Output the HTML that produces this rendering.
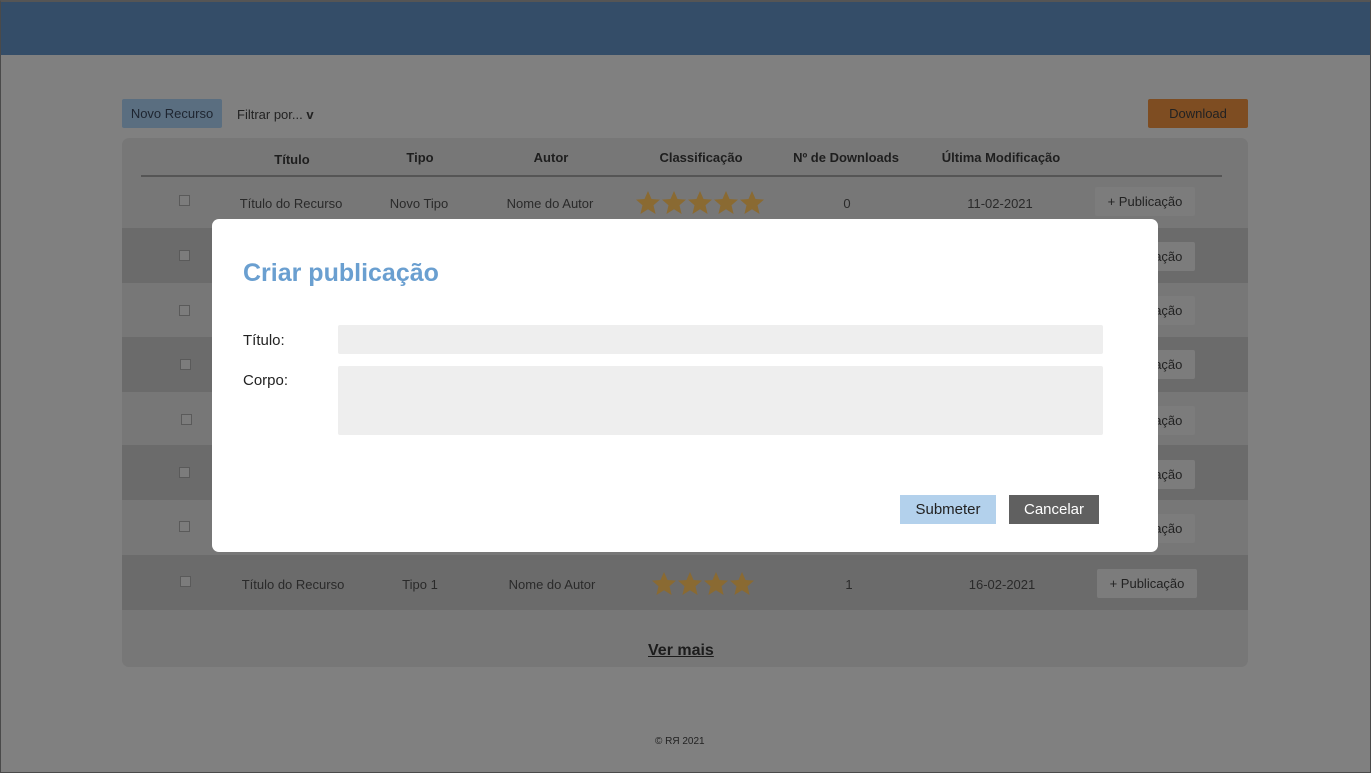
<!DOCTYPE html>
<html><head><meta charset="utf-8"><style>
*{margin:0;padding:0;box-sizing:border-box}
body{width:1371px;height:773px;background:#808080;font-family:"Liberation Sans","DejaVu Sans",sans-serif;position:relative;overflow:hidden;color:#1f1f1f}
.frame{position:absolute;left:0;top:0;width:1371px;height:773px;border:1px solid #4a4a4a;border-top:2px solid #555}
.hdr{position:absolute;left:1px;top:2px;width:1369px;height:53px;background:#344d68}
.abs{position:absolute}
.btn1{left:122px;top:99px;width:100px;height:29px;background:#5a6e80;border-radius:2px;font-size:13px;line-height:29px;text-align:center;color:#1e2530}
.filt{left:237px;top:107px;font-size:13px;color:#222}
.dl{left:1148px;top:99px;width:100px;height:29px;background:#7e4d22;border-radius:2px;font-size:13px;line-height:29px;text-align:center;color:#222}
.tbl{left:122px;top:138px;width:1126px;height:529px;background:#777;border-radius:7px;overflow:hidden}
.th{position:absolute;top:12px;font-size:13px;font-weight:bold;color:#1e1e1e;transform:translateX(-50%)}
.line{position:absolute;left:19px;top:37px;width:1081px;height:2px;background:#555}
.row{position:absolute;left:0;width:1126px;font-size:13px;color:#2a2a2a}
.row.d{background:#6b6b6b}
.row span{position:absolute;transform:translateX(-50%);white-space:nowrap}
.cb{position:absolute;width:11px;height:11px;border:1px solid #5a5a5a;background:#7c7c7c}
.pub{position:absolute;width:100px;height:29px;background:#7c7c7c;border-radius:2px;font-size:13px;line-height:29px;text-align:center;color:#222}
.stars{position:absolute}
.ver{left:648px;top:642px;font-size:16px;font-weight:bold;text-decoration:underline;color:#1c1c1c}
.foot{left:655px;top:736px;font-size:10px;color:#222}
.modal{left:212px;top:219px;width:946px;height:333px;background:#fff;border-radius:7px}
.mt{left:31px;top:40px;font-size:25px;font-weight:bold;color:#6a9fd0}
.lbl{font-size:15px;color:#222}
.inp{background:#eee;border-radius:2px}
.sub{left:688px;top:276px;width:96px;height:29px;background:#b3d1ec;color:#222;font-size:15px;line-height:29px;text-align:center}
.can{left:797px;top:276px;width:90px;height:29px;background:#606060;color:#fff;font-size:15px;line-height:29px;text-align:center}
</style></head><body>
<svg width="0" height="0" style="position:absolute"><defs><polygon id="st" points="12,0 15.5,8 24,8.6 17.5,14.3 19.6,23 12,18.3 4.4,23 6.5,14.3 0,8.6 8.5,8" fill="#8a6a32"/></defs></svg>
<div class="hdr"></div>
<div class="abs btn1">Novo Recurso</div>
<div class="abs filt">Filtrar por... <b>v</b></div>
<div class="abs dl">Download</div>
<div class="abs tbl">
 <div class="th" style="left:170px;top:14px">Título</div>
 <div class="th" style="left:298px">Tipo</div>
 <div class="th" style="left:429px">Autor</div>
 <div class="th" style="left:579px">Classificação</div>
 <div class="th" style="left:724px">Nº de Downloads</div>
 <div class="th" style="left:879px">Última Modificação</div>
 <div class="line"></div>
 <div class="row" style="top:39px;height:51px">
  <div class="cb" style="left:57px;top:18px"></div>
  <span style="left:169px;top:19px">Título do Recurso</span>
  <span style="left:297px;top:19px">Novo Tipo</span>
  <span style="left:428px;top:19px">Nome do Autor</span>
  <svg class="stars" style="left:514px;top:14px" width="128" height="24"><use href="#st" x="0"/><use href="#st" x="26"/><use href="#st" x="52"/><use href="#st" x="78"/><use href="#st" x="104"/></svg>
  <span style="left:725px;top:19px">0</span>
  <span style="left:878px;top:19px">11-02-2021</span>
  <div class="pub" style="left:973px;top:10px">+ Publicação</div>
 </div>
 <div class="row d" style="top:90px;height:55px"><div class="cb" style="left:57px;top:22px"></div><div class="pub" style="left:973px;top:14px">+ Publicação</div></div>
 <div class="row" style="top:145px;height:54px"><div class="cb" style="left:57px;top:22px"></div><div class="pub" style="left:973px;top:13px">+ Publicação</div></div>
 <div class="row d" style="top:199px;height:55px"><div class="cb" style="left:58px;top:22px"></div><div class="pub" style="left:973px;top:13px">+ Publicação</div></div>
 <div class="row" style="top:254px;height:53px"><div class="cb" style="left:59px;top:22px"></div><div class="pub" style="left:973px;top:14px">+ Publicação</div></div>
 <div class="row d" style="top:307px;height:55px"><div class="cb" style="left:57px;top:22px"></div><div class="pub" style="left:973px;top:15px">+ Publicação</div></div>
 <div class="row" style="top:362px;height:55px"><div class="cb" style="left:57px;top:21px"></div><div class="pub" style="left:973px;top:14px">+ Publicação</div></div>
 <div class="row d" style="top:417px;height:55px">
  <div class="cb" style="left:58px;top:21px"></div>
  <span style="left:171px;top:22px">Título do Recurso</span>
  <span style="left:298px;top:22px">Tipo 1</span>
  <span style="left:430px;top:22px">Nome do Autor</span>
  <svg class="stars" style="left:530px;top:17px" width="102" height="24"><use href="#st" x="0"/><use href="#st" x="26"/><use href="#st" x="52"/><use href="#st" x="78"/></svg>
  <span style="left:727px;top:22px">1</span>
  <span style="left:880px;top:22px">16-02-2021</span>
  <div class="pub" style="left:975px;top:14px">+ Publicação</div>
 </div>
</div>
<div class="abs ver">Ver mais</div>
<div class="abs foot">© RЯ 2021</div>
<div class="abs modal">
 <div class="abs mt">Criar publicação</div>
 <div class="abs lbl" style="left:31px;top:113px">Título:</div>
 <div class="abs lbl" style="left:31px;top:153px">Corpo:</div>
 <div class="abs inp" style="left:126px;top:106px;width:765px;height:29px"></div>
 <div class="abs inp" style="left:126px;top:147px;width:765px;height:69px"></div>
 <div class="abs sub">Submeter</div>
 <div class="abs can">Cancelar</div>
</div>
<div class="frame"></div>
</body></html>
